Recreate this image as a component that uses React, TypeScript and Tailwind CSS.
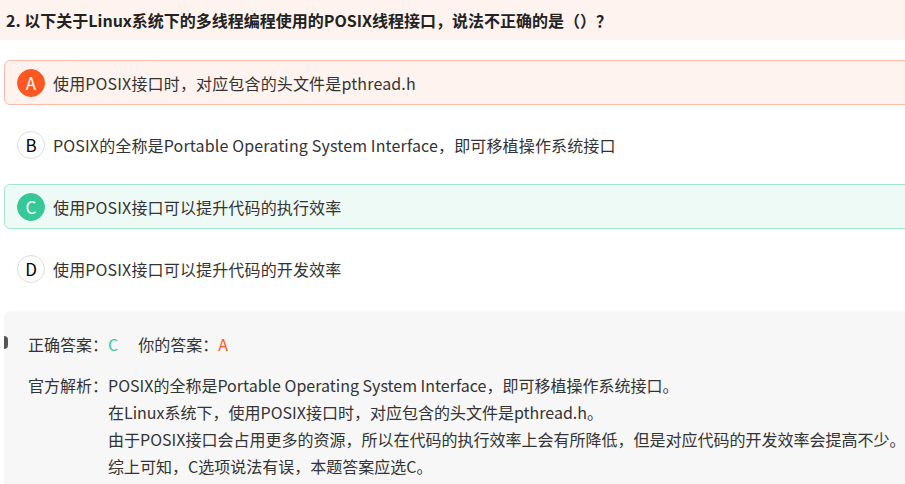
const font = {
  fontFamily: '"Microsoft YaHei", "Noto Sans CJK SC", sans-serif',
};

type Opt = { key: string; text: string; state: "wrong" | "right" | "none" };

const options: Opt[] = [
  { key: "A", text: "使用POSIX接口时，对应包含的头文件是pthread.h", state: "wrong" },
  { key: "B", text: "POSIX的全称是Portable Operating System Interface，即可移植操作系统接口", state: "none" },
  { key: "C", text: "使用POSIX接口可以提升代码的执行效率", state: "right" },
  { key: "D", text: "使用POSIX接口可以提升代码的开发效率", state: "none" },
];

function Option({ o }: { o: Opt }) {
  const card =
    o.state === "wrong"
      ? "border-[#fdbaa6] bg-[#fef3ef]"
      : o.state === "right"
        ? "border-[#a3e6cd] bg-[#eefaf6]"
        : "border-transparent bg-white";
  const circle =
    o.state === "wrong"
      ? "bg-[#fe5722] text-white border-[#fe5722]"
      : o.state === "right"
        ? "bg-[#36c997] text-white border-[#36c997]"
        : "bg-white text-black border-[#dddddd]";
  return (
    <div className={`-mr-4 flex h-[45px] items-center gap-2 rounded-md border pl-3 ${card}`}>
      <span
        className={`flex h-[28px] w-[28px] items-center justify-center rounded-full border text-[17px] ${circle}`}
      >
        {o.key}
      </span>
      <span className="text-[16px] tracking-[0.15px] text-[#333333]">{o.text}</span>
    </div>
  );
}

export default function App() {
  return (
    <div className="h-[484px] w-[905px] overflow-hidden bg-white" style={font}>
      <div className="flex h-[40px] items-center bg-[#fef3ef] pl-[6px]">
        <h2 className="text-[16px] font-bold text-[#222222]">
          2. 以下关于Linux系统下的多线程编程使用的POSIX线程接口，说法不正确的是（）？
        </h2>
      </div>

      <div className="mt-[20px] flex flex-col gap-[17px] pl-1">
        {options.map((o) => (
          <Option key={o.key} o={o} />
        ))}
      </div>

      <div className="relative -mr-4 ml-1 mt-[20px] rounded-tl-lg bg-[#f7f7f7] pb-4 pl-6 pt-[21px] text-[16px] text-[#333333]">
        <span className="absolute left-0 top-[25px] h-[13px] w-[4px] rounded-r-full bg-[#555555]" />
        <div className="flex items-center">
          <span>正确答案：</span>
          <span className="text-[#36c997]">C</span>
          <span className="ml-[20px]">你的答案：</span>
          <span className="text-[#fe5722]">A</span>
        </div>
        <div className="mt-[16px] flex leading-[27px]">
          <span className="shrink-0">官方解析：</span>
          <div>
            <p>POSIX的全称是Portable Operating System Interface，即可移植操作系统接口。</p>
            <p>在Linux系统下，使用POSIX接口时，对应包含的头文件是pthread.h。</p>
            <p className="whitespace-nowrap">
              由于POSIX接口会占用更多的资源，所以在代码的执行效率上会有所降低，但是对应代码的开发效率会提高不少。
            </p>
            <p>综上可知，C选项说法有误，本题答案应选C。</p>
          </div>
        </div>
      </div>
    </div>
  );
}
